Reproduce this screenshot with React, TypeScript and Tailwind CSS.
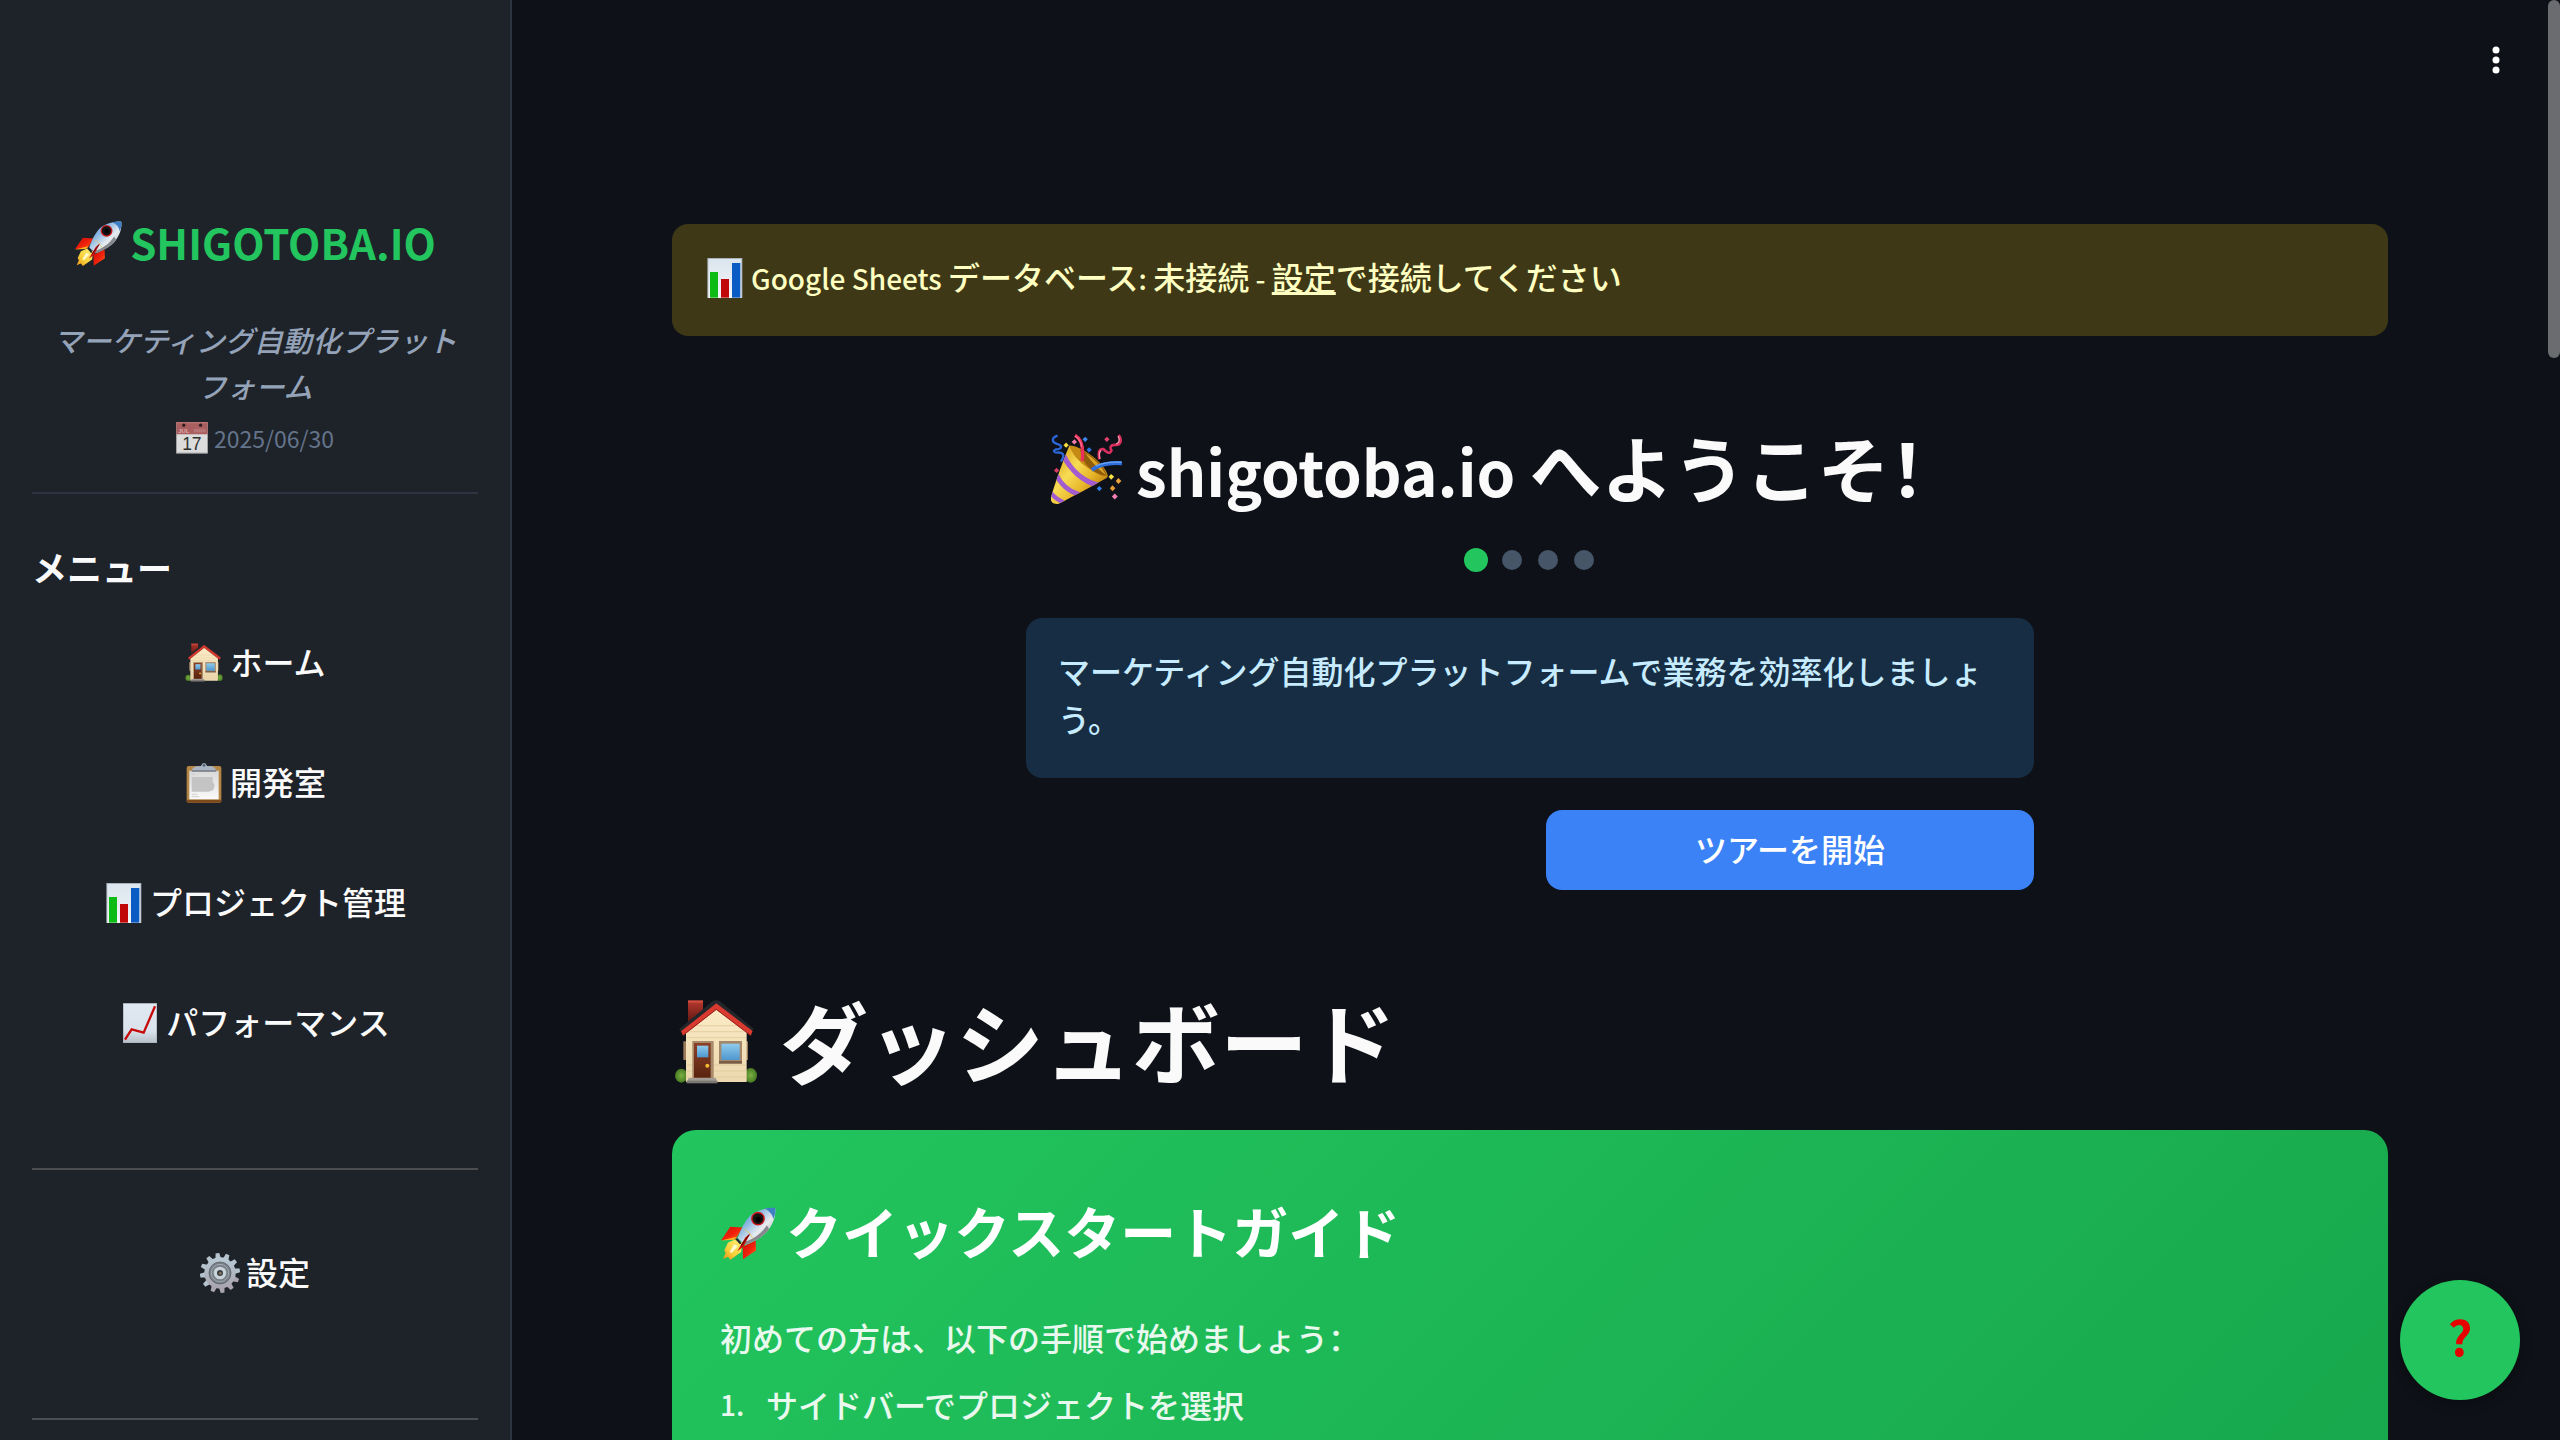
import type { ReactNode } from "react";

type IconProps = { className: string };

function Rocket({ className }: IconProps) {
  return (
    <svg viewBox="225 116 146 146" className={className} aria-hidden="true">
      <defs>
        <linearGradient id="rocketBody" x1="0" y1="0" x2="1" y2="1">
          <stop offset="0" stopColor="#3f7cc0" />
          <stop offset="0.35" stopColor="#8db9e2" />
          <stop offset="0.6" stopColor="#e9ecef" />
          <stop offset="1" stopColor="#7f8489" />
        </linearGradient>
        <linearGradient id="rocketFin" x1="0" y1="0" x2="1" y2="1">
          <stop offset="0" stopColor="#c80f06" />
          <stop offset="0.55" stopColor="#f2210c" />
          <stop offset="1" stopColor="#ff7a1a" />
        </linearGradient>
        <linearGradient id="rocketFlame" x1="1" y1="0" x2="0" y2="1">
          <stop offset="0" stopColor="#fff27a" />
          <stop offset="0.6" stopColor="#f7d03a" />
          <stop offset="1" stopColor="#ee8d14" />
        </linearGradient>
      </defs>
      <path d="M284 172 L252 170 L228 205 L266 202 Z" fill="url(#rocketFin)" />
      <path d="M228 206 L268 196 L262 204 Z" fill="#ffb01f" />
      <path d="M318 206 L319 232 L285 255 L284 222 Z" fill="url(#rocketFin)" />
      <path d="M266 203 L246 211 L236 232 L240 238 L233 254 L246 248 L252 256 L280 236 L283 212 Z" fill="url(#rocketFlame)" />
      <path d="M262 216 L250 236 L256 238 L272 220 Z" fill="#fffbd0" />
      <path d="M369 121 C346 120 320 127 303 142 C289 156 279 178 271 200 L291 217 C318 207 341 194 353 176 C366 158 371 138 369 121 Z" fill="url(#rocketBody)" />
      <path d="M369 121 C360 120 350 121 341 123 C354 128 362 138 364 150 C369 140 370 130 369 121 Z" fill="#3f7fc4" />
      <path d="M353 176 C341 194 318 207 291 217 L284 211 C312 203 334 188 347 166 Z" fill="#85898e" />
      <path d="M287 176 Q304 184 311 201" fill="none" stroke="#e8c65a" strokeWidth="2" />
      <path d="M271 200 L281 213 L277 216 L265 203 Z" fill="#1c2431" />
      <path d="M304 187 L291 198 L270 234 L286 222 Z" fill="#cf1209" />
      <path d="M301 191 L280 219" stroke="#5e0603" strokeWidth="3" />
      <circle cx="324" cy="149" r="18" fill="#c9171b" />
      <circle cx="324" cy="149" r="14" fill="#141414" />
      <circle cx="325" cy="151" r="7" fill="#000" />
    </svg>
  );
}

function House({ className }: IconProps) {
  return (
    <svg viewBox="18 14 264 264" className={className} aria-hidden="true">
      <defs>
        <linearGradient id="houseChimney" x1="0" y1="0" x2="0" y2="1">
          <stop offset="0" stopColor="#b5382d" />
          <stop offset="1" stopColor="#5c1712" />
        </linearGradient>
        <linearGradient id="houseWall" x1="0" y1="0" x2="0" y2="1">
          <stop offset="0" stopColor="#fbebc6" />
          <stop offset="1" stopColor="#ecd8ae" />
        </linearGradient>
        <linearGradient id="houseDoor" x1="0" y1="0" x2="0" y2="1">
          <stop offset="0" stopColor="#8c4126" />
          <stop offset="1" stopColor="#59230f" />
        </linearGradient>
        <linearGradient id="houseGlass" x1="0" y1="0" x2="0" y2="1">
          <stop offset="0" stopColor="#8fcbec" />
          <stop offset="1" stopColor="#4f97cf" />
        </linearGradient>
        <radialGradient id="houseBush">
          <stop offset="0" stopColor="#7cb045" />
          <stop offset="1" stopColor="#477a22" />
        </radialGradient>
      </defs>
      <ellipse cx="46" cy="244" rx="19" ry="21" fill="url(#houseBush)" />
      <ellipse cx="254" cy="243" rx="19" ry="22" fill="url(#houseBush)" />
      <rect x="52" y="141" width="10" height="56" fill="#9b7b5c" />
      <rect x="238" y="141" width="8" height="56" fill="#9b7b5c" />
      <rect x="66" y="20" width="45" height="66" fill="url(#houseChimney)" />
      <rect x="66" y="18" width="45" height="7" fill="#d14c3e" />
      <path d="M60 108 L151 38 L242 108 V263 H60 Z" fill="url(#houseWall)" />
      <path d="M84 94H218M72 112H232M62 130H240M62 212H240M62 230H240M62 248H240" stroke="#dcc495" strokeWidth="2" />
      <path d="M39 105 L138 22 Q151 14 164 22 L264 104 L257 110 L151 28 L46 112 Z" fill="#23262a" />
      <path d="M45 111 L151 27 L260 110 L254 124 L151 46 L51 124 Z" fill="#d93a2f" />
      <path d="M52 122 L151 45 L252 122" fill="none" stroke="#93201a" strokeWidth="3" />
      <rect x="79" y="140" width="64" height="112" fill="#a98a6b" />
      <rect x="84" y="146" width="50" height="104" fill="url(#houseDoor)" />
      <rect x="93" y="154" width="34" height="35" fill="url(#houseGlass)" />
      <circle cx="124" cy="214" r="6" fill="#f3bb33" />
      <rect x="159" y="140" width="69" height="67" fill="#a3876a" />
      <rect x="166" y="148" width="55" height="49" fill="url(#houseGlass)" />
      <path d="M159 200H228V208H159Z" fill="#7a5d44" />
      <path d="M68 251H150L154 266H62Z" fill="#a19c95" />
      <path d="M62 259H154V267H62Z" fill="#7c7771" />
    </svg>
  );
}

function Clipboard({ className }: IconProps) {
  return (
    <svg viewBox="552 489 120 120" className={className} aria-hidden="true">
      <defs>
        <linearGradient id="clipPaper" x1="0" y1="0" x2="0" y2="1">
          <stop offset="0" stopColor="#d8d8d8" />
          <stop offset="1" stopColor="#fafafa" />
        </linearGradient>
      </defs>
      <rect x="560" y="498" width="104" height="110" rx="6" fill="#b48645" />
      <rect x="560" y="599" width="104" height="9" rx="4" fill="#7c4c1c" />
      <rect x="568" y="512" width="88" height="86" fill="url(#clipPaper)" />
      <path d="M575 524H588M575 583H592M575 590H598" stroke="#cfcfcf" strokeWidth="3" />
      <path d="M575 531H638V545L644 555L640 570L626 575H575Z" fill="#c4c4c4" />
      <path d="M575 514 Q577 500 592 499 L603 498 Q606 489 612 489 Q618 489 621 498 L634 499 Q646 501 649 514 Z" fill="#a9b4c2" />
      <path d="M575 511H649V515H575Z" fill="#6d7077" />
      <circle cx="612" cy="496" r="4" fill="#4d5c70" />
    </svg>
  );
}

function BarChart({ className }: IconProps) {
  return (
    <svg viewBox="312 849 120 120" className={className} aria-hidden="true">
      <defs>
        <linearGradient id="barPaper" x1="0" y1="0" x2="0" y2="1">
          <stop offset="0" stopColor="#dbe5ee" />
          <stop offset="1" stopColor="#f3f6f9" />
        </linearGradient>
      </defs>
      <rect x="319" y="849" width="105" height="120" fill="#a9b1ba" />
      <rect x="322" y="852" width="99" height="117" fill="url(#barPaper)" />
      <rect x="327" y="891" width="24" height="77" fill="#0dbb15" />
      <rect x="360" y="912" width="24" height="56" fill="#c00808" />
      <rect x="393" y="864" width="25" height="104" fill="#0b5bc4" />
    </svg>
  );
}

function LineChart({ className }: IconProps) {
  return (
    <svg viewBox="360 1209 120 120" className={className} aria-hidden="true">
      <defs>
        <linearGradient id="linePaper" x1="0" y1="0" x2="0" y2="1">
          <stop offset="0" stopColor="#dfe9f1" />
          <stop offset="0.7" stopColor="#dae3eb" />
          <stop offset="1" stopColor="#b9c1ca" />
        </linearGradient>
      </defs>
      <rect x="369" y="1209" width="102" height="120" fill="#a9b1ba" />
      <rect x="371" y="1212" width="98" height="115" fill="url(#linePaper)" />
      <path d="M375 1319 L395 1288 L431 1298 L465 1219" fill="none" stroke="#c60b0b" strokeWidth="7" />
    </svg>
  );
}

const TEETH = [0, 30, 60, 90, 120, 150, 180, 210, 240, 270, 300, 330];

function Gear({ className }: IconProps) {
  return (
    <svg viewBox="-60 -60 120 120" className={className} aria-hidden="true">
      <defs>
        <linearGradient id="gearMetal" x1="0" y1="0" x2="0" y2="1">
          <stop offset="0" stopColor="#b9cbd6" />
          <stop offset="1" stopColor="#a9a3b0" />
        </linearGradient>
      </defs>
      {TEETH.map((angle) => (
        <path key={angle} d="M-9 -40 L-6 -60 H5 L9 -40 Z" fill={angle > 90 && angle < 240 ? "#aba5b2" : "#b4c3ce"} transform={`rotate(${angle - 7})`} />
      ))}
      <circle r="47" fill="url(#gearMetal)" />
      <circle r="33" fill="#777e86" />
      <circle r="33" fill="none" stroke="#53595f" strokeWidth="2" />
      <circle r="26" fill="none" stroke="#a3acb4" strokeWidth="3" />
      <circle r="19" fill="#c9d3da" />
      <circle r="9" fill="#3a3d41" />
      <circle cx="1" cy="1" r="4" fill="#8a7a63" />
    </svg>
  );
}

function Calendar({ className }: IconProps) {
  return (
    <svg viewBox="528 725 99 99" className={className} aria-hidden="true">
      <rect x="529" y="726" width="97" height="96" fill="#dcdcdc" />
      <path d="M529 726H626V763H529Z" fill="#a95f5f" />
      <path d="M529 726H626V729H529Z" fill="#c27474" />
      <circle cx="552" cy="735" r="5" fill="#2b1c1f" />
      <circle cx="604" cy="735" r="5" fill="#2b1c1f" />
      <text x="535" y="759" fontFamily="Liberation Sans" fontWeight="700" fontSize="18" fill="#dba9a9">JUL</text>
      <path d="M583 746H620V757H583Z" fill="#b67474" />
      <text x="577" y="812" textAnchor="middle" fontFamily="Liberation Sans" fontSize="54" fill="#2f2f2f">17</text>
      <path d="M529 819H626V822H529Z" fill="#b5b5b5" />
    </svg>
  );
}

function PartyPopper({ className }: IconProps) {
  return (
    <svg viewBox="21 22 219 219" className={className} aria-hidden="true">
      <defs>
        <linearGradient id="popperCone" x1="0" y1="0.2" x2="0.8" y2="0.9">
          <stop offset="0" stopColor="#d99d15" />
          <stop offset="0.4" stopColor="#f7dc55" />
          <stop offset="0.7" stopColor="#e8b62a" />
          <stop offset="1" stopColor="#b97a0c" />
        </linearGradient>
        <clipPath id="popperClip">
          <path d="M80 57 C66 90 36 170 24 216 C22 232 34 237 48 234 C90 212 150 180 196 154 C170 150 95 110 80 57 Z" />
        </clipPath>
      </defs>
      <path d="M80 57 C112 55 190 110 197 150 C190 166 150 158 118 128 C90 100 74 72 80 57 Z" fill="#c58a14" />
      <path d="M112 70 C150 84 188 122 193 148 C170 150 140 130 124 104 Z" fill="#8f5c0b" />
      <path d="M128 80 C158 98 184 128 190 146 C176 136 150 112 128 80 Z" fill="#dba526" />
      <path d="M80 57 C66 90 36 170 24 216 C22 232 34 237 48 234 C90 212 150 180 196 154 C170 150 95 110 80 57 Z" fill="url(#popperCone)" />
      <g clipPath="url(#popperClip)" fill="none" stroke="#a35bd0">
        <path d="M62 88 C84 132 122 166 168 178" strokeWidth="16" />
        <path d="M38 142 C52 172 76 196 110 206" strokeWidth="14" />
        <path d="M20 196 C30 212 44 222 62 230" strokeWidth="13" />
      </g>
      <path d="M97 26 C116 36 124 62 119 104" fill="none" stroke="#e8305b" strokeWidth="10" />
      <path d="M97 28 C110 36 116 50 117 62" fill="none" stroke="#ff6f91" strokeWidth="4" />
      <path d="M240 111 C206 108 176 112 148 131" fill="none" stroke="#2f6fdd" strokeWidth="12" />
      <path d="M238 108 C210 106 184 108 160 120" fill="none" stroke="#6aa5f5" strokeWidth="4" />
      <path d="M44 27 C24 34 26 46 42 52 C62 58 56 68 40 69 C28 72 32 80 48 78 C66 80 64 90 54 106" fill="none" stroke="#2c66d6" strokeWidth="7" />
      <path d="M230 25 C240 38 238 56 220 55 C206 54 202 62 208 72 C204 86 190 76 184 68 C168 66 168 80 171 99" fill="none" stroke="#d92f5e" strokeWidth="8" />
      <path d="M228 28 C234 40 232 50 222 52" fill="none" stroke="#ff9db4" strokeWidth="4" />
      <path d="M176 72 C168 80 171 90 173 98" fill="none" stroke="#f793ad" strokeWidth="4" />
      <path d="M70 48 l8 8 l-8 8 l-8 -8 Z" fill="#f4dd3c" />
      <path d="M95 38 l8 8 l-8 8 l-8 -8 Z" fill="#f07da8" />
      <path d="M128 30 l8 8 l-8 8 l-8 -8 Z" fill="#3f86ee" />
      <path d="M140 62 l8 8 l-8 8 l-8 -8 Z" fill="#2f74e6" />
      <path d="M194 30 l8 8 l-8 8 l-8 -8 Z" fill="#e6406f" />
      <path d="M41 125 l8 8 l-8 8 l-8 -8 Z" fill="#d93a64" />
      <path d="M207 144 l9 8 l-9 9 l-8 -9 Z" fill="#f6e246" />
      <path d="M229 156 l9 9 l-9 9 l-8 -9 Z" fill="#eea23a" />
      <path d="M211 178 l9 9 l-9 9 l-8 -9 Z" fill="#e59a33" />
      <path d="M171 180 l8 8 l-8 8 l-8 -8 Z" fill="#2f7bea" />
      <path d="M218 203 l9 9 l-9 9 l-9 -9 Z" fill="#f27fb4" />
    </svg>
  );
}

function NavButton({ icon, children }: { icon: ReactNode; children: ReactNode }) {
  return (
    <button type="button" className="flex h-20 w-full items-center justify-center gap-1.5 rounded-2xl text-[32px] leading-[48px] text-[#fafafa]">
      {icon}
      <span className="pb-1">{children}</span>
    </button>
  );
}

function Sidebar() {
  return (
    <aside className="flex w-[512px] shrink-0 flex-col border-r-2 border-[#2b3440] bg-[#1e2229] px-8 pt-[212px]">
      <h1 className="flex items-center justify-center gap-2 text-[42px] leading-[60px] font-bold text-[#22c55e]">
        <Rocket className="mt-1 size-12" />
        SHIGOTOBA.IO
      </h1>
      <p className="mt-11 px-5 text-center text-[29px] leading-[46px] text-[#94a3b8] italic">マーケティング自動化プラットフォーム</p>
      <p className="mt-2.5 flex items-center justify-center gap-1.5 text-[23px] leading-10 font-normal text-[#64748b]">
        <Calendar className="size-8" />
        2025/06/30
      </p>
      <hr className="mt-[34px] border-t-2 border-[#2b3440]" />
      <h2 className="mt-[45px] text-[35px] leading-[56px] font-bold text-[#fafafa]">メニュー</h2>
      <nav className="mt-7 flex flex-col gap-10">
        <NavButton icon={<House className="size-10" />}>ホーム</NavButton>
        <NavButton icon={<Clipboard className="size-10" />}>開発室</NavButton>
        <NavButton icon={<BarChart className="size-10" />}>プロジェクト管理</NavButton>
        <NavButton icon={<LineChart className="size-10" />}>パフォーマンス</NavButton>
      </nav>
      <hr className="mt-[105px] mb-[63px] border-t-2 border-[#4b4d51]" />
      <NavButton icon={<Gear className="size-10" />}>設定</NavButton>
      <hr className="mt-[105px] border-t-2 border-[#4b4d51]" />
    </aside>
  );
}

function WelcomeTour() {
  return (
    <section className="mt-[82px] grid grid-cols-[322fr_1008fr_322fr] gap-8">
      <div className="col-start-2 flex flex-col">
        <h2 className="flex h-[104px] items-center gap-3.5 px-6 text-[72px] leading-[104px] font-bold whitespace-nowrap text-[#fafafa]">
          <PartyPopper className="size-[72px] shrink-0" />
          <span className="pb-2">
            <span className="text-[62px] leading-none">shigotoba.io </span>へようこそ！
          </span>
        </h2>
        <div className="mt-[26px] flex h-6 items-center justify-center gap-4">
          <span className="-mx-0.5 size-6 rounded-full bg-[#22c55e]" />
          <span className="size-5 rounded-full bg-[#475569]" />
          <span className="size-5 rounded-full bg-[#475569]" />
          <span className="size-5 rounded-full bg-[#475569]" />
        </div>
        <p className="mt-[46px] rounded-2xl bg-[#172d43] px-8 pt-7 pb-9 text-[32px] leading-[48px] text-[#c7ebff]">
          マーケティング自動化プラットフォームで業務を効率化しましょう。
        </p>
        <div className="mt-8 grid grid-cols-2 gap-8">
          <button type="button" className="col-start-2 h-20 rounded-2xl bg-[#3b82f6] pb-1 text-[32px] leading-[48px] text-white">
            ツアーを開始
          </button>
        </div>
      </div>
    </section>
  );
}

function QuickStart() {
  return (
    <section className="mt-[29px] h-[640px] shrink-0 rounded-3xl bg-[linear-gradient(135deg,#22c55e_0%,#16a34a_100%)] px-12 pt-[58px] text-white">
      <h2 className="flex items-center gap-2.5 text-[56px] leading-[84px] font-bold">
        <Rocket className="mt-2 size-14" />
        クイックスタートガイド
      </h2>
      <p className="mt-10 text-[32px] leading-[51px] text-white/90">初めての方は、以下の手順で始めましょう：</p>
      <ol className="mt-4 text-[32px] leading-[51px] text-white/90">
        <li className="flex">
          <span className="w-[46px] text-[28px]">1.</span>
          サイドバーでプロジェクトを選択
        </li>
      </ol>
    </section>
  );
}

export default function App() {
  return (
    <div lang="zh-Hans" className="flex h-screen overflow-hidden bg-[#0e1117] font-['Noto_Sans_CJK_SC',sans-serif] font-medium">
      <Sidebar />
      <main className="flex min-w-0 flex-1 flex-col overflow-hidden">
        <header className="flex h-[120px] shrink-0 items-center justify-end px-8">
          <button type="button" aria-label="メニューを開く" className="flex size-10 items-center justify-center">
            <svg viewBox="0 0 40 40" className="size-10" fill="#fff" aria-hidden="true">
              <circle cx="20" cy="10" r="3.5" />
              <circle cx="20" cy="20" r="3.5" />
              <circle cx="20" cy="30" r="3.5" />
            </svg>
          </button>
        </header>
        <div className="flex flex-col px-40 pt-[104px]">
          <p className="flex h-28 items-center gap-1.5 rounded-2xl bg-[#3e3816] pr-8 pb-1 pl-[33px] text-[32px] leading-[48px] text-[#ffffc2]">
            <BarChart className="size-10" />
            <span className="pb-1">
              <span className="text-[28px] leading-none">Google Sheets </span>データベース<span className="text-[28px] leading-none">: </span>未接続
              <span className="text-[28px] leading-none"> - </span>
              <a href="#settings" className="underline">設定</a>で接続してください
            </span>
          </p>
          <WelcomeTour />
          <h1 className="mt-[87px] flex items-center gap-5 text-[88px] leading-[124px] font-bold text-[#fafafa]">
            <House className="mt-2 size-[88px]" />
            ダッシュボード
          </h1>
          <QuickStart />
        </div>
      </main>
      <div className="w-3 shrink-0">
        <div className="h-[358px] rounded-full bg-[#6b6c70]" />
      </div>
      <button
        type="button"
        aria-label="ヘルプ"
        className="fixed right-10 bottom-10 size-[120px] rounded-full bg-[#22c55e] pb-2.5 text-[48px] font-bold text-[#e60000] shadow-[0_4px_12px_rgba(0,0,0,0.3)]"
      >
        ?
      </button>
    </div>
  );
}
